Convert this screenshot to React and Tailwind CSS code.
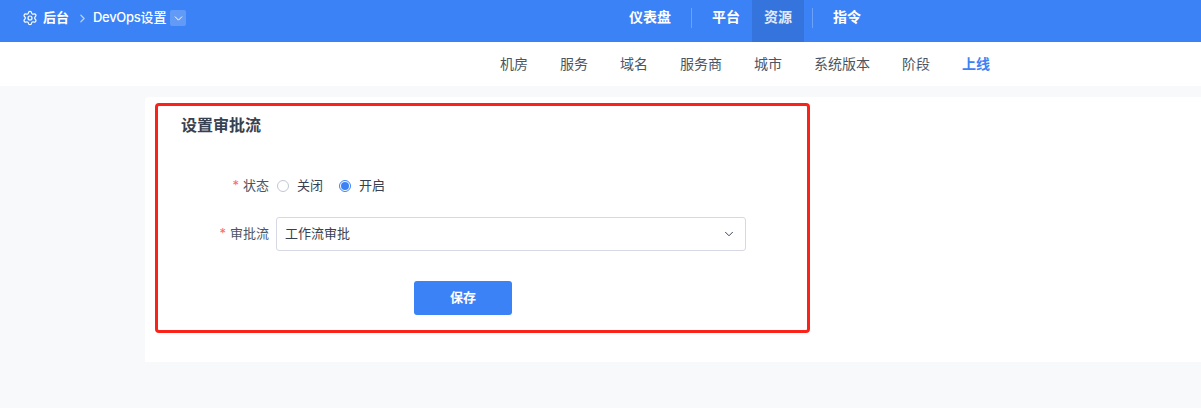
import React from 'react';
import { ChevronDown, ChevronRight, Settings } from 'lucide-react';

const font = "font-['Inter','Noto_Sans_CJK_SC',sans-serif]";

const subNav = [
  { label: '机房' },
  { label: '服务' },
  { label: '域名' },
  { label: '服务商' },
  { label: '城市' },
  { label: '系统版本' },
  { label: '阶段' },
  { label: '上线', active: true },
];

const TopBar = () => (
  <header className="flex h-[42px] items-center bg-[#3b82f6] text-white">
    <div className="flex w-[629px] items-center pb-[6px] pl-[22px] text-[13px] font-medium">
      <Settings size={16} strokeWidth={1.8} />
      <span className="ml-[5px] font-semibold">后台</span>
      <ChevronRight size={13} strokeWidth={2.5} className="ml-[7px] text-white/60" />
      <span className="ml-[4px]">
        <span className="tracking-[-0.3px]">DevOps</span>设置
      </span>
      <span className="ml-[4px] flex h-[16px] w-[16px] items-center justify-center rounded-[2px] bg-white/20">
        <ChevronDown size={13} strokeWidth={1.8} />
      </span>
    </div>
    <nav className="flex h-full items-center text-[14px] font-semibold">
      <span className="pb-[9px]">仪表盘</span>
      <span className="mb-[6px] ml-[20px] h-[20px] w-px bg-white/25" />
      <span className="ml-[20px] pb-[9px]">平台</span>
      <span className="ml-[12px] flex h-full w-[52px] items-center justify-center bg-[#3574dc] pb-[9px] text-white/85">资源</span>
      <span className="mb-[6px] ml-[8px] h-[20px] w-px bg-white/25" />
      <span className="ml-[20px] pb-[9px]">指令</span>
    </nav>
  </header>
);

const SubBar = () => (
  <div className="flex h-[44px] items-center gap-8 bg-white pb-[2px] pl-[500px] text-[14px] text-[#4b5563]">
    {subNav.map((item) => (
      <span key={item.label} className={item.active ? 'font-bold text-[#3b82f6]' : ''}>
        {item.label}
      </span>
    ))}
  </div>
);

const Radio = ({ label, checked }) => (
  <label className="flex items-center gap-2">
    <span
      className={
        checked
          ? 'flex h-[12px] w-[12px] items-center justify-center rounded-full border border-[#3b82f6] bg-white'
          : 'h-[12px] w-[12px] rounded-full border border-[#c3c7d4] bg-white'
      }
    >
      {checked && <span className="h-[8px] w-[8px] rounded-full bg-[#3b82f6]" />}
    </span>
    <span>{label}</span>
  </label>
);

const FormLabel = ({ text }) => (
  <div className="w-[124px] pr-[9px] text-right text-[#4b5563]">
    <span className="mr-[4px] text-[#f56c6c]">*</span>
    {text}
  </div>
);

export default function App() {
  return (
    <div className={`${font} relative h-[408px] w-full overflow-hidden bg-[#f8f9fb] text-[13px] text-[#374151]`}>
      <TopBar />
      <SubBar />
      <main className="ml-[145px] mt-[11px] h-[265px] rounded-tl-[4px] bg-white pl-[36px] pt-[17px]">
        <h2 className="text-[16px] leading-[22px] font-semibold text-[#374151]">设置审批流</h2>
        <div className="-ml-[27px] mt-[40px] flex h-[20px] items-center">
          <FormLabel text="状态" />
          <div className="ml-[-1px] flex items-center gap-[16px]">
            <Radio label="关闭" />
            <Radio label="开启" checked />
          </div>
        </div>
        <div className="-ml-[27px] mt-[21px] flex items-center">
          <FormLabel text="审批流" />
          <div className="ml-[-2px] flex h-[34px] w-[470px] items-center justify-between rounded-[3px] border border-[#d6d8e4] bg-white pl-[8px] pr-[9px]">
            <span>工作流审批</span>
            <ChevronDown size={14} strokeWidth={1.7} className="text-[#374151]" />
          </div>
        </div>
        <button className="ml-[233px] mt-[30px] block h-[34px] w-[98px] rounded-[3px] bg-[#3b82f6] text-[13px] font-semibold text-white">
          保存
        </button>
      </main>
      {/* annotation box over the form */}
      <div className="pointer-events-none absolute left-[155px] top-[103px] h-[230px] w-[655px] rounded-[4px] border-[3px] border-[#f9231a]" />
    </div>
  );
}
